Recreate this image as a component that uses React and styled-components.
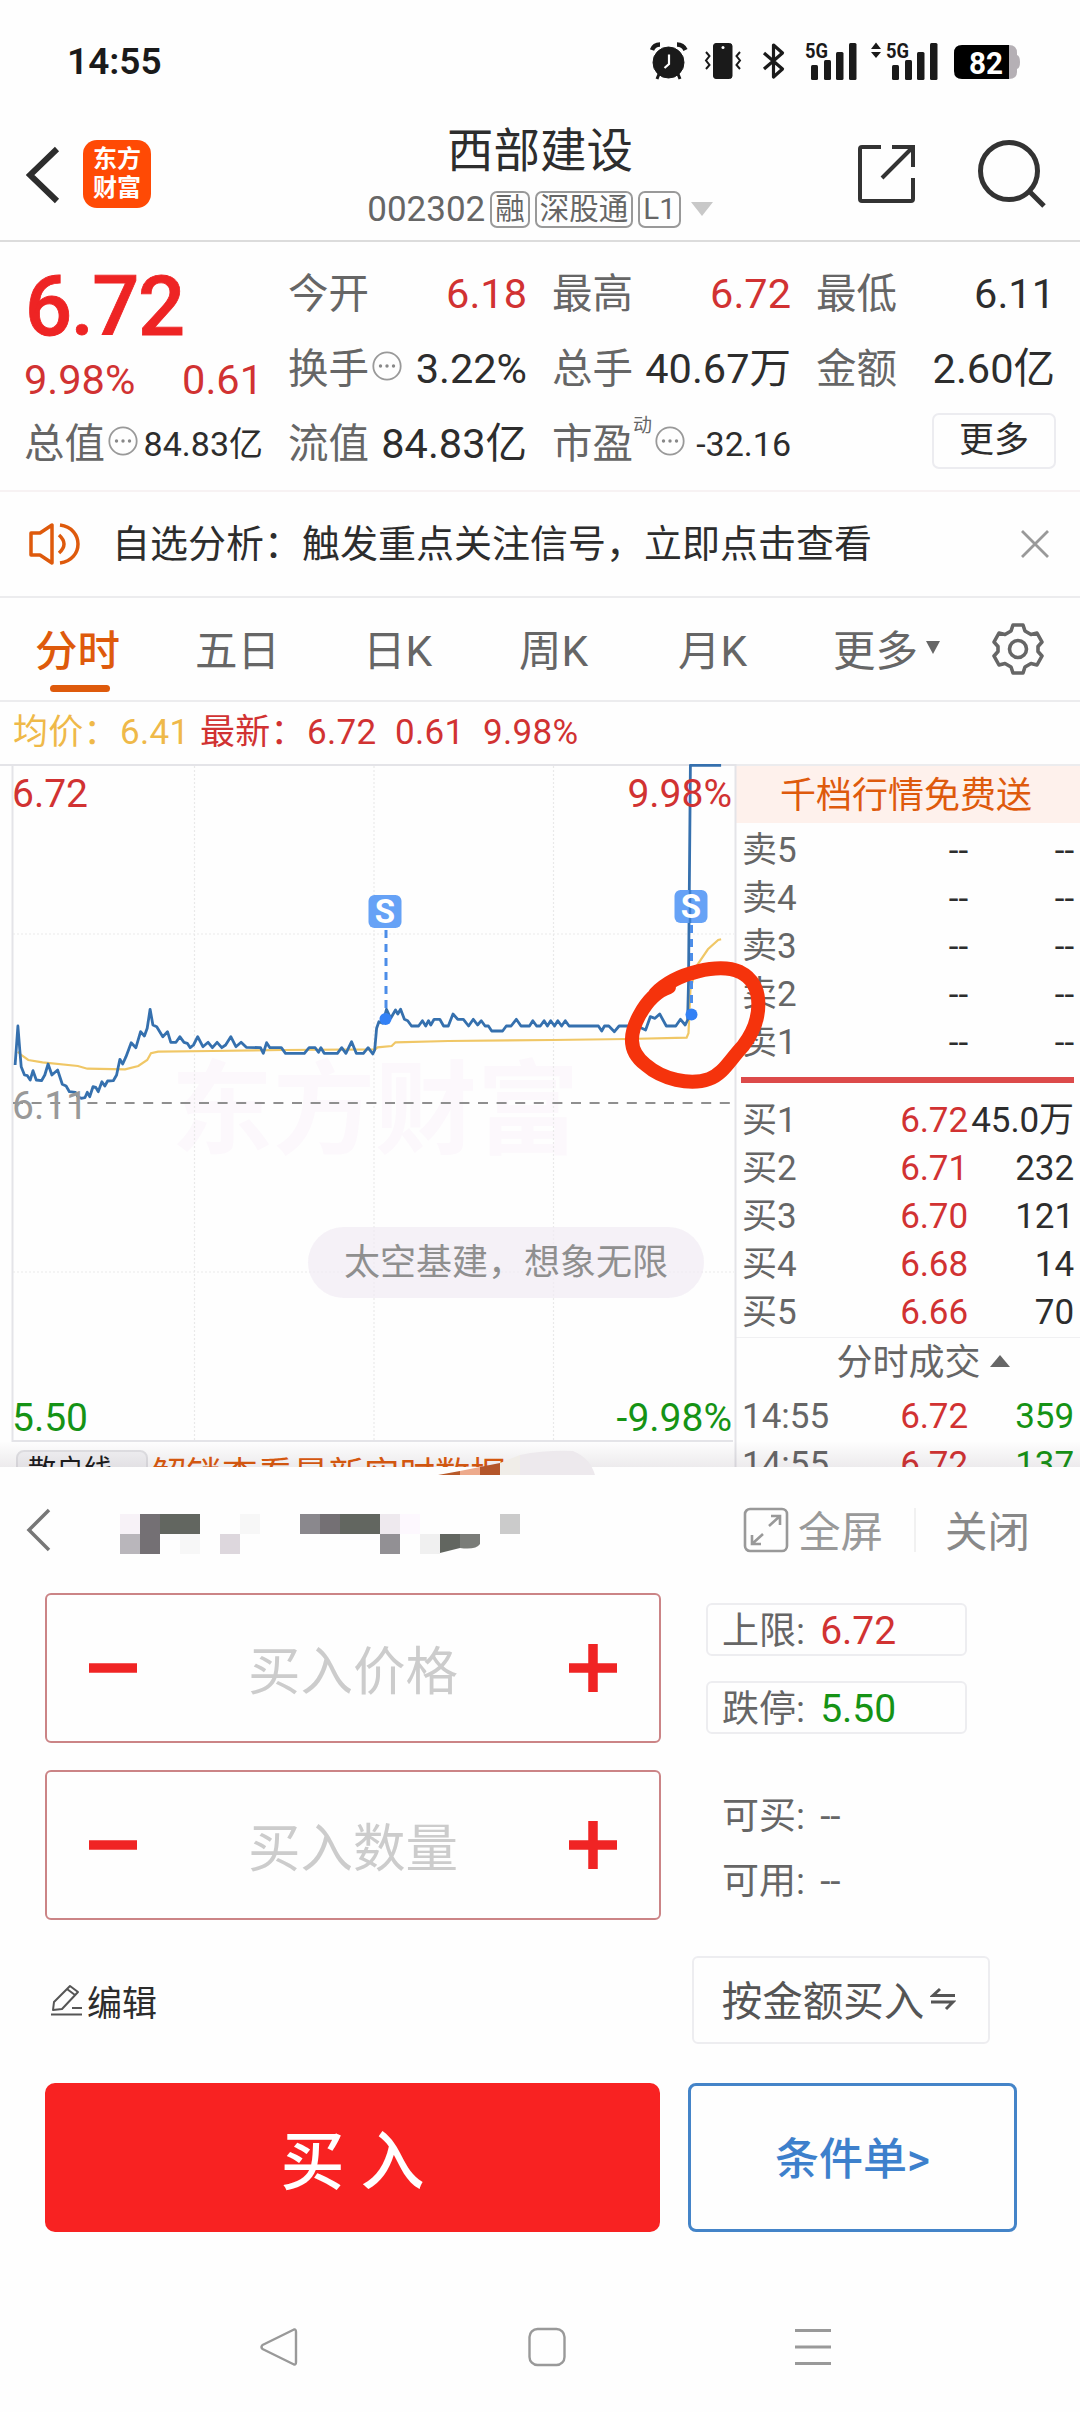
import styled, { createGlobalStyle, css } from "styled-components";

const RED = "#d13232";
const GREEN = "#159315";
const ORANGE = "#de5a0c";
const DARK = "#2d2d2d";
const GRAY = "#666";

const quoteColumns = [
  [
    { label: "今开", value: "6.18", color: RED },
    { label: "换手", value: "3.22%", info: true },
    { label: "流值", value: "84.83亿" },
  ],
  [
    { label: "最高", value: "6.72", color: RED },
    { label: "总手", value: "40.67万" },
    { label: "市盈", value: "-32.16", info: true, sup: "动", small: true },
  ],
  [
    { label: "最低", value: "6.11" },
    { label: "金额", value: "2.60亿" },
  ],
];

const sells = ["卖5", "卖4", "卖3", "卖2", "卖1"];

const buys = [
  ["买1", "6.72", "45.0万"],
  ["买2", "6.71", "232"],
  ["买3", "6.70", "121"],
  ["买4", "6.68", "14"],
  ["买5", "6.66", "70"],
];

const trades = [
  ["14:55", "6.72", "359"],
  ["14:55", "6.72", "137"],
];

const pricePoints = [
  [32, 945], [38, 828], [42, 900], [45, 950], [52, 975], [58, 977], [64, 990], [70, 962],
  [77, 990], [88, 992], [95, 975], [102, 942], [110, 975], [122, 960], [132, 1003], [140, 1008],
  [147, 1025], [160, 1027], [165, 1040], [172, 1045], [180, 1043], [185, 1027], [190, 1040],
  [197, 1010], [203, 1012], [208, 1025], [216, 995], [222, 1008], [228, 993], [240, 992],
  [247, 975], [254, 928], [260, 942], [267, 920], [278, 878], [288, 893], [298, 845], [306, 858],
  [312, 835], [318, 778], [324, 825], [332, 830], [345, 860], [355, 845], [362, 877], [373, 877],
  [381, 860], [390, 877], [397, 880], [403, 893], [410, 885], [419, 860], [430, 890], [441, 877],
  [450, 893], [460, 877], [470, 893], [478, 885], [489, 860], [500, 890], [511, 877], [522, 892],
  [552, 893], [558, 910], [565, 878], [572, 893], [596, 893], [605, 910], [645, 910], [655, 893],
  [668, 893], [675, 907], [680, 893], [687, 910], [715, 910], [724, 893], [733, 910], [745, 875],
  [755, 910], [770, 910], [780, 893], [790, 912], [794, 900], [798, 835], [803, 815], [811, 820],
  [819, 778], [828, 805], [838, 780], [843, 792], [849, 778], [857, 808], [864, 812], [872, 828],
  [887, 828], [895, 812], [902, 828], [908, 812], [913, 825], [920, 808], [932, 808], [940, 828],
  [950, 828], [960, 792], [970, 808], [982, 808], [993, 828], [1003, 808], [1012, 825],
  [1020, 812], [1028, 828], [1035, 828], [1042, 843], [1065, 843], [1073, 828], [1083, 828],
  [1094, 808], [1104, 828], [1122, 828], [1129, 812], [1137, 828], [1145, 828], [1153, 812],
  [1160, 828], [1167, 812], [1175, 828], [1182, 812], [1190, 828], [1198, 812], [1206, 828],
  [1268, 828], [1275, 843], [1281, 828], [1290, 828], [1302, 845], [1312, 828], [1350, 828],
  [1368, 840], [1378, 800], [1388, 805], [1398, 792], [1412, 828], [1432, 828], [1442, 808],
  [1452, 825], [1457, 810], [1459, 700], [1463, 46], [1528, 46],
];

const averagePoints = [
  [38, 905], [45, 915], [60, 930], [90, 937], [165, 948], [185, 956], [265, 958], [293, 948],
  [312, 930], [320, 910], [335, 905], [450, 903], [600, 900], [795, 898], [800, 892], [830, 888],
  [838, 877], [950, 873], [1170, 870], [1330, 867], [1455, 863], [1459, 850], [1463, 720],
  [1475, 650], [1500, 598], [1522, 570], [1528, 568],
];

const toLine = (points) =>
  points.map(([x, y]) => `${(x * 0.4719).toFixed(1)},${(y / 3 - 14).toFixed(1)}`).join(" ");

// [column, row, color], every block is 20x20
const maskedBlocks = [
  [0, 0, "#f7f2f7"], [1, 0, "#747074"], [2, 0, "#626660"], [3, 0, "#626660"], [6, 0, "#f7f7f7"],
  [9, 0, "#8a888d"], [10, 0, "#747074"], [11, 0, "#626660"], [12, 0, "#626660"],
  [13, 0, "#eee9ee"], [14, 0, "#fdf8fe"], [19, 0, "#cbcbcb"],
  [0, 1, "#b9b6bb"], [1, 1, "#747074"], [3, 1, "#f7f7f7"], [5, 1, "#ddd7dd"],
  [13, 1, "#929094"], [15, 1, "#f0f0f0"],
];

function StatusIcons() {
  return (
    <svg width="372" height="42" viewBox="649 41 372 42">
      <g fill="#1a1a1a" stroke="#1a1a1a">
        <circle cx="668.5" cy="63.500" r="15.5" />
        <path d="M652 51 Q654 45.500 660 45.500 M677 45.500 Q683 45.500 685.500 51" fill="none" strokeWidth="4.500" />
        <path d="M659 75 L657 80 M678 75 L680 80" strokeWidth="3" />
        <path d="M669 55.500 V65 L664.500 69" fill="none" stroke="#fff" strokeWidth="2.200" />
        <rect x="713.5" y="44.500" width="18.500" height="35" rx="2.500" />
        <circle cx="723" cy="48.500" r="1.500" fill="#fff" stroke="none" />
        <path d="M706 53 l3.500 4 -3.500 4.500 3.500 4.500 -3.500 4 M740 53 l-3.500 4 3.500 4.500 -3.500 4.500 3.500 4" fill="none" strokeWidth="2" />
        <path d="M764 54 L782.500 70 L773.500 78 V46 L782.500 54 L764 70" fill="none" strokeWidth="3.200" strokeLinejoin="round" />
      </g>
      <g fill="#1a1a1a">
        {[811, 892].map((x) => (
          <g key={x}>
            <rect x={x} y="66" width="7" height="15" rx="1.500" />
            <rect x={x + 13} y="61" width="7" height="20" rx="1.500" />
            <rect x={x + 25} y="53" width="7.500" height="28" rx="1.500" />
            <rect x={x + 38} y="44" width="7.500" height="37" rx="1.500" />
            <text x={x - 6} y="59" fontSize="21" fontWeight="700" textLength="23" lengthAdjust="spacingAndGlyphs">5G</text>
          </g>
        ))}
        <path d="M871 50 L876 43.500 L881 50 Z M871 53 H881 L876 59 Z" />
      </g>
      <path d="M1008 46 H1009 Q1017 46 1017 54 V56 Q1020 57 1020 63 Q1020 69 1017 70 V73 Q1017 80 1009 80 H1008 Z" fill="#b5b0b5" />
      <path d="M962 46 H1009 V80 H962 Q954 80 954 72 V54 Q954 46 962 46 Z" fill="#000" />
      <text x="969" y="74.500" fontSize="31" fontWeight="700" fill="#fff" textLength="34" lengthAdjust="spacingAndGlyphs">82</text>
    </svg>
  );
}

function InfoDots() {
  return (
    <InfoSvg width="30" height="30" viewBox="0 0 30 30">
      <circle cx="15" cy="15" r="13.700" fill="none" stroke="#999" strokeWidth="1.800" />
      <g fill="#888">
        <circle cx="8.500" cy="15" r="1.700" />
        <circle cx="15" cy="15" r="1.700" />
        <circle cx="21.500" cy="15" r="1.700" />
      </g>
    </InfoSvg>
  );
}

function Metric({ item }) {
  return (
    <MetricRow>
      <MetricLabel>{item.label}</MetricLabel>
      {item.sup && <Sup>{item.sup}</Sup>}
      {item.info && <InfoDots />}
      <MetricValue $color={item.color} $small={item.small}>{item.value}</MetricValue>
    </MetricRow>
  );
}

function Chart() {
  return (
    <ChartBox>
      <Watermark>东方财富</Watermark>
      <ChartSvg width="770" height="703" viewBox="0 0 770 703">
        <g fill="none" stroke="#e4e4e8" strokeWidth="2">
          <path d="M0 1 H736 M12.500 0 V677 H733 M735.500 0 V703" />
        </g>
        <g stroke="#e9e9e9" strokeWidth="1.200" strokeDasharray="2 2">
          <path d="M194.500 2 V676 M374 2 V676 M553.500 2 V676 M13 170 H734 M13 508 H734" />
        </g>
        <path d="M13 339 H734" stroke="#8f8f8f" strokeWidth="2" strokeDasharray="10 8.600" />
        <polyline points={toLine(averagePoints)} fill="none" stroke="#f0c766" strokeWidth="2.200" />
        <polyline points={toLine(pricePoints)} fill="none" stroke="#3570ae" strokeWidth="2.800" strokeLinejoin="round" />
        <g stroke="#4c8de8" strokeWidth="3" strokeDasharray="8 6">
          <path d="M386 166 V250 M691.500 161 V250" />
        </g>
        <g fill="#3381f5">
          <circle cx="385.500" cy="255" r="6" />
          <circle cx="691.500" cy="250.500" r="6" />
        </g>
        <rect x="368.500" y="131" width="33" height="33" rx="6" fill="#66a2f6" />
        <rect x="674.500" y="126" width="33" height="33" rx="6" fill="#66a2f6" />
        <path d="M690 126 V159" stroke="#3c7fd0" strokeWidth="2.500" />
        <g fill="#fff" fontSize="33" fontWeight="700" textAnchor="middle">
          <text x="385" y="159">S</text>
          <text x="691" y="154">S</text>
        </g>
      </ChartSvg>
      <AxisLabel $top={10} $left={12} $color={RED}>6.72</AxisLabel>
      <AxisLabel $top={10} $right={4} $color={RED}>9.98%</AxisLabel>
      <AxisLabel $top={322} $left={12} $color="#999">6.11</AxisLabel>
      <AxisLabel $top={634} $left={12} $color={GREEN}>5.50</AxisLabel>
      <AxisLabel $top={634} $right={4} $color={GREEN}>-9.98%</AxisLabel>
      <Slogan>太空基建，想象无限</Slogan>
      <UnlockStrip>
        <LineTag>散户线</LineTag>
        解锁查看最新实时数据
      </UnlockStrip>
    </ChartBox>
  );
}

function OrderBook() {
  return (
    <Book>
      <BookBanner>千档行情免费送</BookBanner>
      <SellRows>
        {sells.map((name) => (
          <BookRow key={name}>
            <span>{name}</span>
            <BookCell>--</BookCell>
            <BookCell>--</BookCell>
          </BookRow>
        ))}
      </SellRows>
      <BookDivider />
      {buys.map(([name, price, volume]) => (
        <BookRow key={name}>
          <span>{name}</span>
          <BookCell $color={RED}>{price}</BookCell>
          <BookCell>{volume}</BookCell>
        </BookRow>
      ))}
      <TradesTitle>
        分时成交
        <svg width="22" height="14" viewBox="0 0 22 14">
          <path d="M1 13 L11 1 L21 13 Z" fill="#666" />
        </svg>
      </TradesTitle>
      {trades.map(([time, price, volume]) => (
        <BookRow key={volume}>
          <span>{time}</span>
          <BookCell $color={RED}>{price}</BookCell>
          <BookCell $color={GREEN}>{volume}</BookCell>
        </BookRow>
      ))}
    </Book>
  );
}

function Stepper({ placeholder }) {
  return (
    <StepperBox>
      <svg width="48" height="48" viewBox="0 0 48 48">
        <path d="M0 24 H48" stroke="#f02424" strokeWidth="9.500" />
      </svg>
      <span>{placeholder}</span>
      <svg width="48" height="48" viewBox="0 0 48 48">
        <path d="M0 24 H48 M24 0 V48" stroke="#f02424" strokeWidth="9.500" />
      </svg>
    </StepperBox>
  );
}

export default function App() {
  return (
    <Page>
      <GlobalStyle />
      <StatusBar>
        <Clock>14:55</Clock>
        <StatusIcons />
      </StatusBar>

      <Header>
        <HeaderSide>
          <svg width="34" height="58" viewBox="0 0 34 58">
            <path d="M31 3 L4 29 L31 55" fill="none" stroke="#2d2d2d" strokeWidth="6" />
          </svg>
          <Logo>
            东方
            <br />
            财富
          </Logo>
        </HeaderSide>
        <TitleBlock>
          <StockName>西部建设</StockName>
          <StockCode>
            002302
            <CodeTag>融</CodeTag>
            <CodeTag>深股通</CodeTag>
            <CodeTag>L1</CodeTag>
            <svg width="22" height="14" viewBox="0 0 22 14">
              <path d="M0 0 H22 L11 14 Z" fill="#c8c8c8" />
            </svg>
          </StockCode>
        </TitleBlock>
        <HeaderIcons>
          <svg width="60" height="60" viewBox="0 0 60 60" fill="none" stroke="#333" strokeWidth="4">
            <path d="M24 3 H5 Q3 3 3 5 V55 Q3 57 5 57 H54 Q56 57 56 55 V34 M35 3 H56 V23 M56 3 L25 34" />
          </svg>
          <svg width="70" height="70" viewBox="0 0 70 70" fill="none" stroke="#333" strokeWidth="5">
            <circle cx="32" cy="32" r="28.500" />
            <path d="M52 52 L67 67" />
          </svg>
        </HeaderIcons>
      </Header>

      <Quote>
        <QuoteColumn>
          <Price>6.72</Price>
          <Change>
            <span>9.98%</span>
            <span>0.61</span>
          </Change>
          <Metric item={{ label: "总值", value: "84.83亿", info: true, small: true }} />
        </QuoteColumn>
        {quoteColumns.map((column, i) => (
          <QuoteColumn key={i}>
            {column.map((item) => (
              <Metric key={item.label} item={item} />
            ))}
            {i === 2 && <MoreButton>更多</MoreButton>}
          </QuoteColumn>
        ))}
      </Quote>

      <Notice>
        <svg width="54" height="44" viewBox="0 0 54 44" fill="none" stroke="#de5a0c" strokeWidth="3.500">
          <path d="M3 11 H12 L24 3 V41 L12 33 H3 Z" strokeLinejoin="round" />
          <path d="M31 13 Q41 22 31 31 M32 3 C56 6 56 38 32 41" />
        </svg>
        <NoticeText>自选分析：触发重点关注信号，立即点击查看</NoticeText>
        <svg width="30" height="30" viewBox="0 0 30 30">
          <path d="M2 2 L28 28 M28 2 L2 28" stroke="#999" strokeWidth="2.800" />
        </svg>
      </Notice>

      <Tabs>
        <Tab $active>分时</Tab>
        <Tab>五日</Tab>
        <Tab>日K</Tab>
        <Tab>周K</Tab>
        <Tab>月K</Tab>
        <Tab>
          更多
          <svg width="14" height="13" viewBox="0 0 14 13">
            <path d="M0 0 H14 L7 13 Z" fill="#666" />
          </svg>
        </Tab>
        <svg width="54" height="54" viewBox="0 0 54 54" fill="none" stroke="#666" strokeWidth="3.600">
          <path d="M22 3 H32 L34 9 L40 12.500 L46 11 L51 20 L47 24.500 V29.500 L51 34 L46 43 L40 41.500 L34 45 L32 51 H22 L20 45 L14 41.500 L8 43 L3 34 L7 29.500 V24.500 L3 20 L8 11 L14 12.500 L20 9 Z" strokeLinejoin="round" />
          <circle cx="27" cy="27" r="8.500" />
        </svg>
      </Tabs>

      <Legend>
        <LegendItem $color="#efb949" $width={187}>均价：<b>6.41</b></LegendItem>
        <LegendItem $color={RED} $width={195}>最新：<b>6.72</b></LegendItem>
        <LegendItem $color={RED} $width={88}>0.61</LegendItem>
        <LegendItem $color={RED}>9.98%</LegendItem>
      </Legend>

      <Market>
        <Chart />
        <OrderBook />
        <BottomShade />
        <MarkerSvg width="770" height="703" viewBox="0 0 770 703">
          <path
            d="M655 230 C676 208 720 199 740 208 C765 220 763 256 743 282 C729 297 723 310 709 315 C690 322 662 315 646 301 C626 286 631 267 639 252 C647 237 657 227 669 223"
            fill="none"
            stroke="#f5330c"
            strokeWidth="14"
            strokeLinecap="round"
            strokeLinejoin="round"
          />
        </MarkerSvg>
      </Market>

      <TradePanel>
        <Scrap width="160" height="26" viewBox="438 1450 160 26">
          <path d="M438 1475 L460 1471 V1475 Z" fill="#b85a2a" />
          <path d="M460 1471 L480 1467 V1475 H460 Z" fill="#edaa8c" />
          <path d="M480 1467 L500 1463 V1475 H480 Z" fill="#b4562a" />
          <path d="M500 1463 L520 1455 V1475 H500 Z" fill="#f0ede8" />
          <path d="M520 1455 Q545 1450 573 1451 Q590 1458 595 1475 H520 Z" fill="#ede9ed" />
        </Scrap>
        <PanelHeader>
          <svg width="28" height="44" viewBox="0 0 28 44">
            <path d="M24 2 L4 22 L24 42" fill="none" stroke="#777" strokeWidth="3.500" />
          </svg>
          <Masked width="420" height="42" viewBox="0 0 420 42">
            {maskedBlocks.map(([x, y, color]) => (
              <rect key={`${x}-${y}`} x={x * 20} y={y * 20} width="20" height="20" fill={color} />
            ))}
            <path d="M320 20 H340 V34 L320 39 Z" fill="#626660" />
            <path d="M340 20 H360 V30 Q356 36 340 34 Z" fill="#7a7c78" />
          </Masked>
          <PanelAction>
            <svg width="46" height="46" viewBox="0 0 46 46" fill="none" stroke="#999" strokeWidth="2.600">
              <rect x="2" y="2" width="42" height="42" rx="5" />
              <path d="M26 19 L37 9 M28 9 H37 V18 M20 27 L9 37 M9 28 V37 H18" />
            </svg>
            <span>全屏</span>
          </PanelAction>
          <ActionDivider />
          <CloseAction>关闭</CloseAction>
        </PanelHeader>

        <PanelBody>
          <Steppers>
            <Stepper placeholder="买入价格" />
            <Stepper placeholder="买入数量" />
          </Steppers>
          <Limits>
            <LimitTag $color={RED}>上限: <b>6.72</b></LimitTag>
            <LimitTag $color={GREEN}>跌停: <b>5.50</b></LimitTag>
            <AvailableList>
              <Available>可买: <b>--</b></Available>
              <Available>可用: <b>--</b></Available>
            </AvailableList>
          </Limits>
        </PanelBody>

        <OptionsRow>
          <EditLink>
            <svg width="34" height="34" viewBox="0 0 34 34" fill="none" stroke="#555" strokeWidth="2">
              <path d="M3 27 L4 19 L20 3 L28 9 L12 26 Z M17 6 L25 12 M1 31.500 H32 M22 25 H32" strokeLinejoin="round" />
            </svg>
            编辑
          </EditLink>
          <AmountButton>
            按金额买入
            <svg width="26" height="24" viewBox="0 0 26 24" fill="none" stroke="#555" strokeWidth="3">
              <path d="M25 8.500 H3 L10 2 M1 15 H23 L16 22" />
            </svg>
          </AmountButton>
        </OptionsRow>

        <SubmitRow>
          <BuyButton>买 入</BuyButton>
          <ConditionButton>条件单&gt;</ConditionButton>
        </SubmitRow>
      </TradePanel>

      <NavBar>
        <svg width="40" height="40" viewBox="0 0 40 40">
          <path d="M35 2.500 Q37 2 37 5 V35 Q37 38 35 37.500 L3.500 22 Q1.500 20 3.500 18 Z" fill="none" stroke="#999" strokeWidth="2.400" strokeLinejoin="round" />
        </svg>
        <svg width="40" height="40" viewBox="0 0 40 40">
          <rect x="3.500" y="2" width="35" height="36" rx="8" fill="none" stroke="#999" strokeWidth="2.400" />
        </svg>
        <svg width="40" height="40" viewBox="0 0 40 40">
          <path d="M2 3.500 H38 M2 20 H38 M2 36.500 H38" stroke="#999" strokeWidth="2.800" />
        </svg>
      </NavBar>
    </Page>
  );
}

const GlobalStyle = createGlobalStyle`
  * {
    box-sizing: border-box;
  }

  body {
    margin: 0;
    background: #fefefe;
    font-family: Roboto, "Noto Sans CJK SC", sans-serif;
    color: ${DARK};
  }

  svg {
    display: block;
    flex-shrink: 0;
  }

  button {
    padding: 0;
    font-family: inherit;
    background: transparent;
  }
`;

const Page = styled.div`
  width: 1080px;
  height: 2412px;
  overflow: hidden;
  display: flex;
  flex-direction: column;
  background: #fefefe;
`;

const StatusBar = styled.div`
  height: 120px;
  flex-shrink: 0;
  padding: 2px 59px 0 67px;
  display: flex;
  align-items: center;
  justify-content: space-between;
`;

const Clock = styled.div`
  font-size: 37px;
  font-weight: 600;
  color: #1a1a1a;
`;

const Header = styled.header`
  height: 122px;
  flex-shrink: 0;
  border-bottom: 2px solid #dcdcdc;
  display: grid;
  grid-template-columns: 330px 420px 330px;
`;

const HeaderSide = styled.div`
  display: flex;
  align-items: flex-start;
  gap: 23px;
  padding: 20px 0 0 26px;

  > svg {
    margin-top: 6px;
  }
`;

const Logo = styled.div`
  width: 68px;
  height: 68px;
  border-radius: 14px;
  padding-top: 5px;
  background: #ff4a05;
  color: #fff;
  font-size: 24px;
  font-weight: 700;
  line-height: 29px;
  text-align: center;
`;

const TitleBlock = styled.div`
  display: flex;
  flex-direction: column;
  align-items: center;
`;

const StockName = styled.h1`
  margin: 0;
  font-size: 46.500px;
  font-weight: 400;
  line-height: 62px;
`;

const StockCode = styled.div`
  height: 54px;
  display: flex;
  align-items: center;
  gap: 5px;
  font-size: 35px;
  color: ${GRAY};

  svg {
    margin-left: 5px;
  }
`;

const CodeTag = styled.span`
  height: 37px;
  padding: 0 3px;
  border: 2px solid #999;
  border-radius: 7px;
  font-size: 29.500px;
  line-height: 32px;
`;

const HeaderIcons = styled.div`
  display: flex;
  align-items: flex-start;
  gap: 60px;
  padding: 24px 0 0 107px;

  svg:last-child {
    margin-top: -5px;
  }
`;

const Quote = styled.section`
  height: 250px;
  flex-shrink: 0;
  padding: 14px 25px 0;
  border-bottom: 2px solid #f7f2f3;
  display: grid;
  grid-template-columns: repeat(4, 238px);
  column-gap: 26px;
`;

const QuoteColumn = styled.div`
  display: flex;
  flex-direction: column;
`;

const Price = styled.div`
  height: 97px;
  line-height: 101px;
  font-size: 83px;
  font-weight: 500;
  letter-spacing: -1.500px;
  -webkit-text-stroke: 0.800px #ee2424;
  color: #ee2424;
`;

const Change = styled.div`
  height: 53px;
  display: flex;
  align-items: center;
  justify-content: space-between;
  margin: 0 0 0 -1px;
  font-size: 41.500px;
  color: ${RED};
`;

const MetricRow = styled.div`
  height: 75px;
  display: flex;
  align-items: center;
`;

const MetricLabel = styled.span`
  margin-left: -1px;
  font-size: 40.500px;
  line-height: 60px;
  color: ${GRAY};
`;

const Sup = styled.span`
  align-self: flex-start;
  margin-top: 4px;
  font-size: 19px;
  color: ${GRAY};
`;

const InfoSvg = styled.svg`
  margin: -6px 0 0 3px;
`;

const MetricValue = styled.span`
  margin-left: auto;
  font-size: ${(p) => (p.$small ? 34 : 41.5)}px;
  line-height: 60px;
  white-space: nowrap;
  color: ${(p) => p.$color || DARK};
`;

const MoreButton = styled.button`
  width: 124px;
  height: 56px;
  margin: 7px -1px 0 auto;
  border: 2px solid #ececf0;
  border-radius: 7px;
  font-size: 35px;
  line-height: 48px;
  color: ${DARK};
`;

const Notice = styled.section`
  height: 106px;
  flex-shrink: 0;
  padding: 0 30px 0 28px;
  border-bottom: 2px solid #ececee;
  display: flex;
  align-items: center;
`;

const NoticeText = styled.div`
  flex: 1;
  margin-left: 30px;
  font-size: 38px;
  line-height: 50px;
`;

const Tabs = styled.nav`
  height: 104px;
  flex-shrink: 0;
  padding-left: 35px;
  border-bottom: 2px solid #ececee;
  display: grid;
  grid-template-columns: 160px 168px 156px 159px 155px 158px 54px;
  align-items: center;
`;

const Tab = styled.div`
  position: relative;
  height: 102px;
  padding-bottom: 3px;
  display: flex;
  align-items: center;
  gap: 8px;
  font-size: 42.500px;
  white-space: nowrap;
  color: ${(p) => (p.$active ? ORANGE : GRAY)};

  ${(p) =>
    p.$active &&
    css`
      font-weight: 500;

      &::after {
        content: "";
        position: absolute;
        bottom: 8px;
        left: 15px;
        width: 60px;
        height: 7px;
        border-radius: 4px;
        background: ${ORANGE};
      }
    `}
`;

const Legend = styled.div`
  height: 62px;
  flex-shrink: 0;
  padding-left: 13px;
  display: flex;
  align-items: center;
  font-size: 35px;

  b {
    margin-left: 1px;
    font-weight: 400;
  }
`;

const LegendItem = styled.span`
  width: ${(p) => (p.$width ? `${p.$width}px` : "auto")};
  line-height: 50px;
  white-space: nowrap;
  letter-spacing: 0.300px;
  color: ${(p) => p.$color};
`;

const Market = styled.section`
  position: relative;
  height: 703px;
  flex-shrink: 0;
  overflow: hidden;
  display: flex;
`;

const ChartBox = styled.div`
  position: relative;
  width: 736px;
  height: 703px;
`;

const ChartSvg = styled.svg`
  position: absolute;
  top: 0;
  left: 0;
`;

const MarkerSvg = styled(ChartSvg)`
  pointer-events: none;
`;

const AxisLabel = styled.span`
  position: absolute;
  top: ${(p) => p.$top}px;
  ${(p) => (p.$left !== undefined ? `left: ${p.$left}px;` : `right: ${p.$right}px;`)}
  font-size: 39px;
  line-height: 40px;
  color: ${(p) => p.$color};
`;

const Watermark = styled.div`
  position: absolute;
  top: 264px;
  left: 171px;
  font-size: 102px;
  font-weight: 700;
  white-space: nowrap;
  color: #fcf8fc;
`;

const Slogan = styled.div`
  position: absolute;
  top: 463px;
  left: 308px;
  width: 396px;
  height: 71px;
  border-radius: 36px;
  background: rgba(241, 235, 243, 0.700);
  font-size: 36px;
  line-height: 72px;
  text-align: center;
  color: #8f8f8f;
`;

const UnlockStrip = styled.div`
  position: absolute;
  top: 686px;
  left: 16px;
  display: flex;
  gap: 3px;
  font-size: 35.500px;
  line-height: 50px;
  white-space: nowrap;
  color: ${ORANGE};
`;

const LineTag = styled.span`
  width: 132px;
  height: 46px;
  padding-left: 10px;
  border: 2px solid #e2e2e5;
  border-radius: 8px;
  background: #f3f3f5;
  font-size: 28px;
  line-height: 38px;
  color: #1a1a1a;
`;

const BottomShade = styled.div`
  position: absolute;
  left: 0;
  right: 0;
  bottom: 0;
  height: 26px;
  background: linear-gradient(rgba(60, 40, 60, 0), rgba(60, 40, 60, 0.090));
`;

const Book = styled.div`
  width: 344px;
  display: flex;
  flex-direction: column;
`;

const BookBanner = styled.div`
  height: 59px;
  flex-shrink: 0;
  padding-right: 4px;
  border-top: 2px solid #ececee;
  background: #fef1ec;
  font-size: 36px;
  line-height: 60px;
  text-align: center;
  color: ${ORANGE};
`;

const SellRows = styled.div`
  padding-top: 4px;
`;

const BookRow = styled.div`
  height: 48px;
  flex-shrink: 0;
  padding: 0 6px 0 6px;
  display: grid;
  grid-template-columns: 90px 136px 106px;
  align-items: center;
  font-size: 35px;
  line-height: 48px;
  white-space: nowrap;
  color: ${GRAY};
`;

const BookCell = styled.span`
  display: flex;
  justify-content: flex-end;
  letter-spacing: -0.100px;
  color: ${(p) => p.$color || DARK};
`;

const BookDivider = styled.div`
  height: 6px;
  flex-shrink: 0;
  margin: 10px 6px 14px 5px;
  background: #dc4a4a;
`;

const TradesTitle = styled.div`
  height: 56px;
  flex-shrink: 0;
  padding: 0 0 5px 31px;
  border-top: 1px solid #f0f0f2;
  display: flex;
  align-items: center;
  justify-content: center;
  gap: 8px;
  font-size: 36px;
  line-height: 50px;
  color: ${GRAY};

  svg {
    margin-top: -4px;
  }
`;

const TradePanel = styled.section`
  position: relative;
  height: 825px;
  flex-shrink: 0;
  padding: 0 45px;
`;

const Scrap = styled.svg`
  position: absolute;
  top: -17px;
  left: 438px;
`;

const PanelHeader = styled.div`
  height: 126px;
  margin: 0 -20px;
  display: flex;
  align-items: center;
`;

const Masked = styled.svg`
  margin: 10px 203px 0 67px;
`;

const PanelAction = styled.div`
  display: flex;
  align-items: center;
  gap: 9px;
  font-size: 42.500px;
  color: #999;

  span {
    margin-top: -4px;
  }
`;

const ActionDivider = styled.div`
  width: 2px;
  height: 44px;
  margin: 0 29px 0 31px;
  background: #f1f1f1;
`;

const CloseAction = styled.div`
  margin-top: -4px;
  font-size: 42.500px;
  color: #888;
`;

const PanelBody = styled.div`
  display: flex;
  gap: 45px;
`;

const Steppers = styled.div`
  display: flex;
  flex-direction: column;
  gap: 27px;
`;

const StepperBox = styled.div`
  width: 616px;
  height: 150px;
  padding: 0 42px;
  border: 2px solid #cb8486;
  border-radius: 6px;
  display: flex;
  align-items: center;
  justify-content: space-between;
  font-size: 52.500px;
  color: #ccc;

  span {
    margin-top: -3px;
  }
`;

const Limits = styled.div`
  padding-top: 10px;
  color: ${GRAY};
  font-size: 37px;

  b {
    margin-left: 6px;
    font-weight: 400;
  }
`;

const LimitTag = styled.div`
  width: 261px;
  height: 53px;
  margin-bottom: 25px;
  padding-left: 14px;
  border: 2px solid #ededf0;
  border-radius: 6px;
  line-height: 53px;

  b {
    font-size: 39px;
    color: ${(p) => p.$color};
  }
`;

const AvailableList = styled.div`
  padding: 25px 0 0 16px;
`;

const Available = styled.div`
  height: 65px;
  line-height: 65px;
`;

const OptionsRow = styled.div`
  height: 88px;
  margin: 36px 45px 0 5px;
  display: flex;
  align-items: center;
  justify-content: space-between;
`;

const EditLink = styled.div`
  display: flex;
  align-items: center;
  gap: 3px;
  font-size: 35px;
`;

const AmountButton = styled.button`
  width: 298px;
  height: 88px;
  padding: 0 4px 3px 0;
  border: 2px solid #ededf0;
  border-radius: 6px;
  display: flex;
  align-items: center;
  justify-content: center;
  gap: 6px;
  font-size: 40.500px;
  color: #555;
`;

const SubmitRow = styled.div`
  margin-top: 39px;
  display: flex;
  gap: 28px;
`;

const BuyButton = styled.button`
  width: 615px;
  height: 149px;
  padding-bottom: 4px;
  border: 0;
  border-radius: 10px;
  background: #f82222;
  color: #fff;
  font-size: 64px;
  font-weight: 500;
`;

const ConditionButton = styled.button`
  width: 329px;
  height: 149px;
  padding-bottom: 3px;
  border: 3px solid #4484c8;
  border-radius: 8px;
  color: #3d80cc;
  font-size: 44px;
  font-weight: 500;
`;

const NavBar = styled.div`
  flex: 1;
  padding: 35px 247px 0 259px;
  display: flex;
  justify-content: space-between;
`;
